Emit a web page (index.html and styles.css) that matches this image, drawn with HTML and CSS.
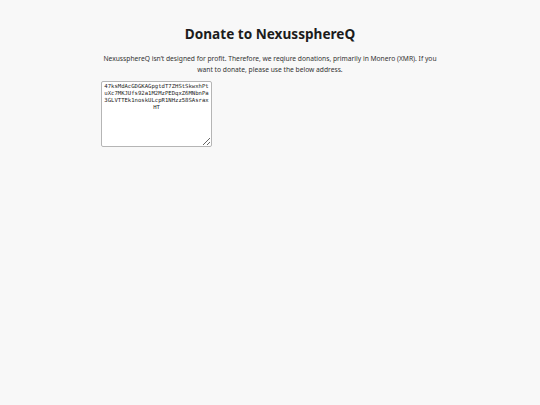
FILE: index.html
```html
<!DOCTYPE html>
<html>
<head>
<meta charset="utf-8">
<link rel="stylesheet" href="styles.css">
</head>
<body>
<main class="page">
  <h1 class="title">Donate to NexussphereQ</h1>
  <p class="intro">NexussphereQ isn’t designed for profit. Therefore, we reqiure donations, primarily in Monero (XMR). If you want to donate, please use the below address.</p>
  <textarea class="address" readonly spellcheck="false">47ksMdAcGDGKAGpgtdT7ZHStSkwxhPtuXc7MKJUfs92a1M2MzPEDqxZ6MNbnPa3GLVTTEk1noskULcpR1NHzz58SAsraxHT</textarea>
</main>
</body>
</html>
```

FILE: styles.css
```css
html, body {
  margin: 0;
  padding: 0;
  background: #f8f8f8;
}
body {
  font-family: "Noto Sans", "Open Sans", sans-serif;
  color: #222;
}
.page {
  width: 338px;
  margin: 0 auto;
  padding-top: 24px;
  text-align: center;
}
.title {
  margin: 0;
  font-size: 13.6px;
  font-weight: 700;
  line-height: 20px;
  color: #1c1c1c;
}
.intro {
  margin: 9px 0 6px;
  font-size: 6.7px;
  line-height: 11px;
  color: #333;
}
.address {
  display: block;
  box-sizing: border-box;
  width: 111px;
  height: 66px;
  margin: 0;
  padding: 1px 1px;
  font-family: "DejaVu Sans Mono", monospace;
  font-size: 5.6px;
  line-height: 7px;
  text-align: center;
  color: #222;
  background: #fff;
  border: 1px solid #b5b5b5;
  border-radius: 2px;
  resize: both;
  word-break: break-all;
}
```
